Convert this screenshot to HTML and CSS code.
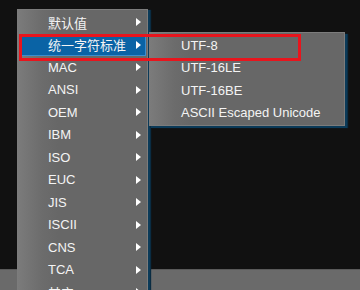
FILE: index.html
```html
<!DOCTYPE html>
<html lang="zh-CN">

<head>
    <meta charset="UTF-8">
    <meta name="viewport" content="width=device-width, initial-scale=1.0">
    <title>编码菜单</title>
    <link rel="stylesheet" href="styles.css">
</head>

<body>
    <div class="screen">
        <!-- 后面的窗口 -->
        <div class="workspace"></div>
        <div class="statusbar"></div>

        <!-- 主菜单 -->
        <ul class="menu main-menu">
            <li class="item"><span class="label">默认值</span><span class="arrow"></span></li>
            <li class="item active"><span class="label">统一字符标准</span><span class="arrow"></span></li>
            <li class="item"><span class="label">MAC</span><span class="arrow"></span></li>
            <li class="item"><span class="label">ANSI</span><span class="arrow"></span></li>
            <li class="item"><span class="label">OEM</span><span class="arrow"></span></li>
            <li class="item"><span class="label">IBM</span><span class="arrow"></span></li>
            <li class="item"><span class="label">ISO</span><span class="arrow"></span></li>
            <li class="item"><span class="label">EUC</span><span class="arrow"></span></li>
            <li class="item"><span class="label">JIS</span><span class="arrow"></span></li>
            <li class="item"><span class="label">ISCII</span><span class="arrow"></span></li>
            <li class="item"><span class="label">CNS</span><span class="arrow"></span></li>
            <li class="item"><span class="label">TCA</span><span class="arrow"></span></li>
            <li class="item"><span class="label">其它</span><span class="arrow"></span></li>
        </ul>

        <!-- 子菜单 -->
        <ul class="menu sub-menu">
            <li class="item"><span class="label">UTF-8</span></li>
            <li class="item"><span class="label">UTF-16LE</span></li>
            <li class="item"><span class="label">UTF-16BE</span></li>
            <li class="item"><span class="label">ASCII Escaped Unicode</span></li>
        </ul>

        <!-- 红框标注 -->
        <div class="mark"></div>
    </div>
</body>

</html>
```

FILE: styles.css
```css
/* 整体 */
body {
    margin: 0;
    padding: 0;
    background: #111111;
    font-family: "Liberation Sans", "Noto Sans CJK SC", sans-serif;
    font-size: 13px;
    color: #f4f4f4;
}

.screen {
    position: relative;
    width: 360px;
    height: 290px;
    overflow: hidden;
    display: flex;
    flex-direction: column;
}

.workspace {
    flex: 1;
    background: #111111;
}

/* 下面的状态栏 */
.statusbar {
    height: 20px;
    background: #6a6a6a;
    border-top: 1px solid #5a5a5a;
}

/* 菜单共通 */
.menu {
    position: absolute;
    margin: 0;
    padding: 1px 0;
    list-style: none;
    background: linear-gradient(90deg, #7b7b7b 0px, #6c6c6c 24px, #676767 40px, #676767 100%);
    border: 1px solid #7c7c7c;
}

.item {
    position: relative;
    display: flex;
    align-items: center;
    height: 22.5px;
    box-sizing: border-box;
    border: 1px solid transparent;
    margin: 0 1px;
    white-space: nowrap;
}

.label {
    flex: 1;
}

.main-menu {
    left: 17px;
    top: 9px;
    width: 129px;
    box-shadow: 2px 1px 0 #0b3a58, 3px 1px 1px #0a2c42;
}

.main-menu .label {
    padding-left: 28px;
}

.main-menu .active {
    background: #0a63a5;
    border-color: #3a8dcf;
}

/* 小三角 */
.arrow {
    width: 0;
    height: 0;
    margin-right: 4px;
    border-top: 4px solid transparent;
    border-bottom: 4px solid transparent;
    border-left: 5px solid #ffffff;
}

.sub-menu {
    left: 149px;
    top: 32px;
    width: 194px;
    box-shadow: 2px 2px 0 #0b3a58, 3px 2px 1px #0a2c42;
}

.sub-menu .label {
    padding-left: 29px;
}

/* 红框 */
.mark {
    position: absolute;
    left: 19px;
    top: 34px;
    width: 276px;
    height: 21px;
    border: 3px solid #e8151d;
}
```
